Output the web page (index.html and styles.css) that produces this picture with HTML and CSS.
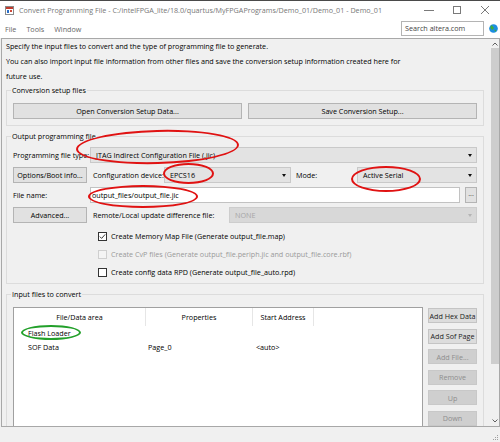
FILE: index.html
```html
<!DOCTYPE html>
<html>
<head>
<meta charset="utf-8">
<title>Convert Programming File</title>
<link rel="stylesheet" href="styles.css">
</head>
<body>
<div class="window">
  <div class="titlebar">
    <svg class="app-icon" width="9" height="9" viewBox="0 0 9 9">
      <rect x="0.5" y="0.5" width="8" height="8" fill="#fff" stroke="#8a8a8a"/>
      <rect x="1" y="1" width="7" height="2" fill="#c0392b"/>
      <rect x="2" y="4" width="2" height="3" fill="#2a6fc9"/>
      <rect x="5" y="4" width="2" height="2" fill="#d04a3a"/>
    </svg>
    <span class="title">Convert Programming File - C:/intelFPGA_lite/18.0/quartus/MyFPGAPrograms/Demo_01/Demo_01 - Demo_01</span>
    <div class="controls">
      <span class="ctl"><svg width="10" height="10" viewBox="0 0 10 10"><line x1="0" y1="5.5" x2="10" y2="5.5" stroke="#7a7a7a" stroke-width="1"/></svg></span>
      <span class="ctl"><svg width="10" height="10" viewBox="0 0 10 10"><rect x="1.5" y="1.5" width="7" height="7" fill="none" stroke="#7a7a7a" stroke-width="1"/></svg></span>
      <span class="ctl"><svg width="10" height="10" viewBox="0 0 10 10"><path d="M1 1 L9 9 M9 1 L1 9" stroke="#7a7a7a" stroke-width="1"/></svg></span>
    </div>
  </div>

  <div class="menubar">
    <span class="menu">File</span>
    <span class="menu">Tools</span>
    <span class="menu">Window</span>
    <div class="search">Search altera.com</div>
    <svg class="globe" width="9" height="9" viewBox="0 0 10 10">
      <circle cx="5" cy="5" r="4.8" fill="#1d8ee0"/>
      <path d="M3 1.5 C4.5 2 4 3.5 5.2 4 C6 4.5 5 6 3.6 6.4 C2.6 6.6 2.4 5 1.6 4.4 C1.2 3.5 2 2 3 1.5 Z" fill="#3fae3a"/>
      <path d="M6.5 6 C7.5 6 8.2 7 7.6 8 C7 8.6 6.2 8 6.2 7.2 Z" fill="#3fae3a"/>
    </svg>
  </div>

  <div class="frame">
    <div class="viewport">
      <p class="intro">Specify the input files to convert and the type of programming file to generate.<br>You can also import input file information from other files and save the conversion setup information created here for<br>future use.</p>

      <div class="group g-setup">
        <div class="group-title">Conversion setup files</div>
        <div class="btn-row">
          <div class="btn half">Open Conversion Setup Data...</div>
          <div class="btn half">Save Conversion Setup...</div>
        </div>
      </div>

      <div class="group g-output">
        <div class="group-title">Output programming file</div>
        <div class="form-row first">
          <span class="lbl w-lbl">Programming file type:</span>
          <div class="combo grow"><span class="combo-text">JTAG Indirect Configuration File (.jic)</span><i class="arrow"></i></div>
        </div>
        <div class="form-row">
          <div class="btn w-btn">Options/Boot info...</div>
          <span class="lbl w-dev">Configuration device:</span>
          <div class="combo w-devcombo"><span class="combo-text">EPCS16</span><i class="arrow"></i></div>
          <span class="lbl w-mode">Mode:</span>
          <div class="combo grow mode"><span class="combo-text">Active Serial</span><i class="arrow"></i></div>
        </div>
        <div class="form-row">
          <span class="lbl w-lbl">File name:</span>
          <div class="input grow">output_files/output_file.jic</div>
          <div class="btn dots">...</div>
        </div>
        <div class="form-row">
          <div class="btn w-btn">Advanced...</div>
          <span class="lbl w-remote">Remote/Local update difference file:</span>
          <div class="combo grow disabled"><span class="combo-text">NONE</span><i class="arrow"></i></div>
        </div>
        <div class="check-row first-check">
          <span class="box"><svg width="9" height="9" viewBox="0 0 9 9"><path d="M1.8 4.6 L3.6 6.4 L7.2 2.4" fill="none" stroke="#222" stroke-width="0.9"/></svg></span>
          <span class="check-text">Create Memory Map File (Generate output_file.map)</span>
        </div>
        <div class="check-row disabled">
          <span class="box"></span>
          <span class="check-text">Create CvP files (Generate output_file.periph.jic and output_file.core.rbf)</span>
        </div>
        <div class="check-row">
          <span class="box"></span>
          <span class="check-text">Create config data RPD (Generate output_file_auto.rpd)</span>
        </div>
      </div>

      <div class="group g-input">
        <div class="group-title">Input files to convert</div>
        <div class="input-area">
          <div class="table">
            <div class="trow thead">
              <span class="c1 th">File/Data area</span>
              <span class="c2 th">Properties</span>
              <span class="c3 th">Start Address</span>
            </div>
            <div class="trow">
              <span class="c1 td indent">Flash Loader</span>
              <span class="c2 td"></span>
              <span class="c3 td"></span>
            </div>
            <div class="trow">
              <span class="c1 td indent">SOF Data</span>
              <span class="c2 td">Page_0</span>
              <span class="c3 td">&lt;auto&gt;</span>
            </div>
          </div>
          <div class="side-buttons">
            <div class="btn side">Add Hex Data</div>
            <div class="btn side">Add Sof Page</div>
            <div class="btn side off">Add File...</div>
            <div class="btn side off">Remove</div>
            <div class="btn side off">Up</div>
            <div class="btn side off">Down</div>
          </div>
        </div>
      </div>
    </div>

    <div class="vscroll">
      <div class="sb-arrow"><svg width="6" height="4" viewBox="0 0 6 4"><path d="M0.5 3.5 L3 1 L5.5 3.5" fill="none" stroke="#606060" stroke-width="1"/></svg></div>
      <div class="sb-thumb"></div>
      <div class="sb-track"></div>
      <div class="sb-arrow down"><svg width="6" height="4" viewBox="0 0 6 4"><path d="M0.5 0.5 L3 3 L5.5 0.5" fill="none" stroke="#606060" stroke-width="1"/></svg></div>
    </div>
  </div>

  <div class="statusbar">
    <svg class="grip" width="8" height="8" viewBox="0 0 8 8">
      <rect x="6" y="2" width="1" height="1" fill="#a0a0a0"/>
      <rect x="4" y="4" width="1" height="1" fill="#a0a0a0"/>
      <rect x="6" y="4" width="1" height="1" fill="#a0a0a0"/>
      <rect x="2" y="6" width="1" height="1" fill="#a0a0a0"/>
      <rect x="4" y="6" width="1" height="1" fill="#a0a0a0"/>
      <rect x="6" y="6" width="1" height="1" fill="#a0a0a0"/>
    </svg>
  </div>

  <div class="mark red m-type"></div>
  <div class="mark red m-dev"></div>
  <div class="mark red m-mode"></div>
  <div class="mark red m-file"></div>
  <div class="mark green m-flash"></div>
</div>
</body>
</html>
```

FILE: styles.css
```css
* { box-sizing: border-box; }

html, body {
  margin: 0;
  padding: 0;
}

body {
  width: 500px;
  height: 442px;
  overflow: hidden;
  background: #f0f0f0;
  font-family: "Open Sans", "Noto Sans", sans-serif;
  font-size: 7.2px;
  color: #000;
}

.window {
  position: relative;
  width: 500px;
  height: 442px;
  display: flex;
  flex-direction: column;
  background: #f0f0f0;
}

/* title bar */
.titlebar {
  height: 19px;
  flex: none;
  display: flex;
  align-items: center;
  background: #fff;
  border-top: 1px solid #4a4a4a;
}
.app-icon { margin-left: 5px; flex: none; }
.title {
  margin-left: 5px;
  color: #777;
  font-size: 7.2px;
  white-space: nowrap;
}
.controls {
  margin-left: auto;
  display: flex;
  margin-right: 1px;
}
.ctl {
  width: 28px;
  height: 18px;
  display: flex;
  align-items: center;
  justify-content: center;
}

/* menu bar */
.menubar {
  height: 19px;
  flex: none;
  display: flex;
  align-items: center;
  background: #fff;
}
.menu {
  padding: 0 5px;
  color: #666;
}
.search {
  margin-left: auto;
  width: 83px;
  height: 15px;
  border: 1px solid #b4b4b4;
  background: #fff;
  color: #444;
  padding-left: 3px;
  line-height: 13px;
}
.globe { margin: 0 2px 0 5px; flex: none; }

/* main framed scroll area */
.frame {
  height: 389px;
  flex: none;
  margin-left: 1px;
  width: 499px;
  border: 1px solid #a8a8a8;
  display: flex;
}
.viewport {
  flex: 1;
  overflow: hidden;
  min-width: 0;
}
.intro {
  margin: 0;
  padding-left: 4px;
  line-height: 15px;
  white-space: nowrap;
}

/* group boxes */
.group {
  margin: 0 6px 0 4px;
  border: 1px solid #dcdcdc;
  padding: 0 6px;
}
.group-title {
  margin-top: -6px;
  margin-left: -2px;
  height: 10px;
  line-height: 10px;
  padding: 0 1px;
  width: fit-content;
  background: #f0f0f0;
}
.g-setup { margin-top: 6px; padding-bottom: 6px; }
.g-output { margin-top: 10px; padding-bottom: 2px; }
.g-input { margin-top: 10px; padding-bottom: 20px; }

.btn-row {
  margin-top: 8px;
  display: flex;
  gap: 6px;
}

.btn {
  height: 16px;
  background: #e1e1e1;
  border: 1px solid #b4b4b4;
  display: flex;
  align-items: center;
  justify-content: center;
  white-space: nowrap;
  flex: none;
}
.half { flex: 1; }

/* form rows */
.form-row {
  display: flex;
  align-items: center;
  height: 16px;
  margin-top: 4px;
}
.form-row.first { margin-top: 6px; }
.lbl { white-space: nowrap; flex: none; }
.w-lbl { width: 77px; }
.w-btn { width: 74px; }
.w-dev { margin-left: 6px; width: 71px; }
.w-devcombo { width: 127px; flex: none; padding-left: 4px; }
.w-mode { margin-left: 5px; width: 61px; }
.w-remote { margin-left: 6px; width: 136px; }
.grow { flex: 1; min-width: 0; }

.combo {
  height: 16px;
  background: #e3e3e3;
  border: 1px solid #c9c9c9;
  display: flex;
  align-items: center;
  padding: 0 4px 0 5px;
}
.combo-text { flex: 1; white-space: nowrap; }
.arrow {
  width: 0;
  height: 0;
  border-left: 2.5px solid transparent;
  border-right: 2.5px solid transparent;
  border-top: 3px solid #111;
}
.combo.disabled {
  background: #d8d8d8;
  border-color: #cdcdcd;
  color: #a6a6a6;
}
.combo.disabled .arrow { border-top-color: #b4b4b4; }

.input {
  height: 16px;
  background: #fff;
  border: 1px solid #c2c2c2;
  display: flex;
  align-items: center;
  padding-left: 1px;
}
.dots {
  width: 12px;
  margin-left: 5px;
  height: 16px;
  align-items: flex-end;
  padding-bottom: 4px;
  color: #444;
}

/* checkboxes */
.check-row {
  display: flex;
  align-items: center;
  height: 18px;
  padding-left: 85px;
}
.first-check { margin-top: 4px; }
.box {
  width: 9px;
  height: 9px;
  border: 1px solid #333;
  background: #fff;
  flex: none;
  display: flex;
}
.box svg { margin: -1px; }
.check-text { margin-left: 4px; white-space: nowrap; }
.check-row.disabled .box { border-color: #cfcfcf; background: #f4f4f4; }
.check-row.disabled .check-text { color: #9a9a9a; }

/* input files table */
.input-area {
  margin-top: 8px;
  display: flex;
  gap: 5px;
}
.table {
  width: 410px;
  height: 150px;
  background: #fff;
  border: 1px solid #a0a0a0;
  flex: none;
}
.trow { display: flex; height: 14px; align-items: center; }
.thead { height: 18px; align-items: stretch; }
.c1 { width: 132px; }
.c2 { width: 107px; }
.c3 { width: 61px; }
.th {
  display: flex;
  align-items: center;
  justify-content: center;
  border-right: 1px solid #e6e6e6;
  white-space: nowrap;
}
.td { white-space: nowrap; }
.c1.indent { padding-left: 14px; }
.c2.td { padding-left: 2px; }
.c3.td { padding-left: 3px; }

.side-buttons {
  flex: 1;
  display: flex;
  flex-direction: column;
  gap: 5.5px;
  margin-top: 1px;
}
.btn.side {
  height: 15px;
  background: #dcdcdc;
  border-color: #c4c4c4;
  color: #222;
}
.btn.side.off {
  background: #cfcfcf;
  border-color: #c8c8c8;
  color: #8e8e8e;
}

/* vertical scrollbar */
.vscroll {
  width: 9px;
  flex: none;
  display: flex;
  flex-direction: column;
  background: #f0f0f0;
}
.sb-arrow {
  height: 9px;
  display: flex;
  align-items: center;
  justify-content: center;
  flex: none;
}
.sb-arrow.down { height: 10px; }
.sb-thumb {
  height: 316px;
  margin-left: 1px;
  background: #cdcdcd;
  flex: none;
}
.sb-track { flex: 1; }

/* status bar */
.statusbar {
  flex: 1;
  display: flex;
  justify-content: flex-end;
  align-items: flex-end;
}
.grip { margin: 0 1px 1px 0; }

/* annotation ellipses drawn over the screenshot */
.mark {
  position: absolute;
  border-radius: 50%;
  border: 2px solid #e01212;
  pointer-events: none;
}
.mark.green { border-color: #22a02a; }
.m-type { left: 76px; top: 130px; width: 163px; height: 34px; transform: rotate(-1.5deg); }
.m-dev { left: 163px; top: 163px; width: 51px; height: 21px; }
.m-mode { left: 351px; top: 166px; width: 70px; height: 26px; }
.m-file { left: 88px; top: 185px; width: 110px; height: 23px; }
.m-flash { left: 21px; top: 325px; width: 60px; height: 15px; }
```
